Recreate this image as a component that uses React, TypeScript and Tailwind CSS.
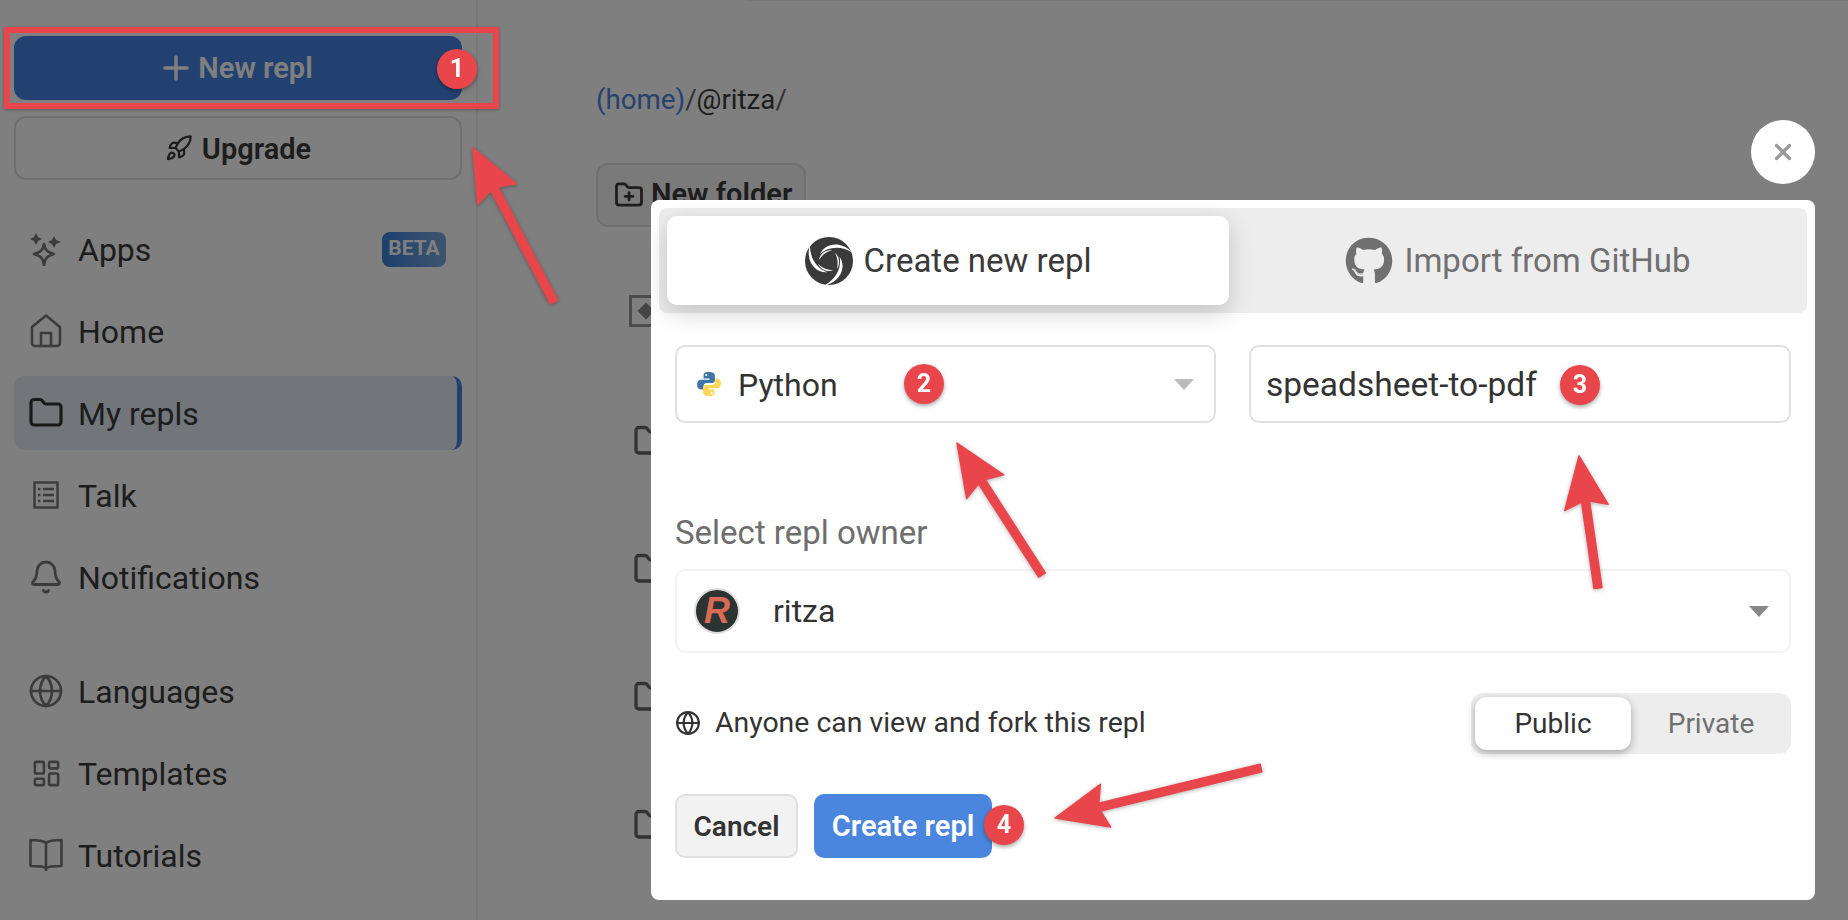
import React from 'react';
import { Bell, Folder, FolderPlus, Globe, LayoutDashboard, Plus, Rocket, X } from 'lucide-react';
import { FaGithub } from 'react-icons/fa';

const font = { fontFamily: 'Roboto, "Noto Sans", sans-serif' };

const AppsIcon = () => (
  <svg width="32" height="34" viewBox="0 0 32 34" fill="none" stroke="currentColor" strokeWidth="2.6" strokeLinejoin="round">
    <path d="M14 12 C15 18 17 20 24 22 C17 24 15 26 14 33 C13 26 11 24 4 22 C11 20 13 18 14 12 Z" />
    <path d="M6 1 L8 5 L12 7 L8 9 L6 13 L4 9 L0 7 L4 5 Z" fill="currentColor" stroke="none" />
    <path d="M24 4 L26 8 L31 10 L26 12 L24 16 L22 12 L18 10 L22 8 Z" fill="currentColor" stroke="none" />
  </svg>
);

const HomeIcon = () => (
  <svg width="32" height="34" viewBox="0 0 32 34" fill="none" stroke="currentColor" strokeWidth="2.6" strokeLinejoin="round">
    <path d="M2 13 L16 1.5 L30 13 V29 a3 3 0 0 1 -3 3 H5 a3 3 0 0 1 -3 -3 Z" />
    <path d="M11 32 V19 H21 V32" />
  </svg>
);

const TalkIcon = () => (
  <svg width="26" height="28" viewBox="0 0 26 28" fill="none" stroke="currentColor" strokeWidth="2.4">
    <rect x="1.5" y="1.5" width="23" height="25" />
    <path d="M10 8 H21 M10 14 H21 M10 20 H21 M5 8 H7.5 M5 14 H7.5 M5 20 H7.5" />
  </svg>
);

const BookIcon = () => (
  <svg width="34" height="34" viewBox="0 0 34 34" fill="none" stroke="currentColor" strokeWidth="2.6" strokeLinejoin="round">
    <path d="M17 5 C14 2.5 7 2 1.5 2 V28 C7 28 14 28 17 30 C20 28 27 28 32.5 28 V2 C27 2 20 2.5 17 5 Z" />
    <path d="M17 5 V33" />
  </svg>
);

// three white blades curling round a dot, like the reference's swirl
const SwirlLogo = () => (
  <svg width="48" height="48" viewBox="-24 -24 48 48">
    <circle r="24" fill="#3a3a3a" />
    {[0, 120, 240].map(a => (
      <g key={a} transform={`rotate(${a})`}>
        <path d="M-9 -7 C-4 -18 12 -21 24 -8 C13 -15 0 -15 -9 -7 Z" fill="#fff" />
        <path d="M-10 -1 C-9 -7 -4 -11 3 -11 C-3 -9 -7 -6 -10 -1 Z" fill="#fff" />
      </g>
    ))}
    <circle r="6.5" fill="#3a3a3a" />
  </svg>
);

const PythonLogo = () => (
  <svg width="26" height="26" viewBox="0 0 24 24">
    <path d="M12 1 C7 1 7 3 7 4.5 V7 H12.5 V8 H4.5 C2.5 8 1 9.5 1 12.5 C1 15.5 2.5 17 4.5 17 H7 V14 C7 12 8.5 11 10 11 H15 C16.5 11 17.5 10 17.5 8.5 V4.5 C17.5 2.5 16 1 12 1 Z" fill="#3f75a8" />
    <path d="M12 23 C17 23 17 21 17 19.5 V17 H11.5 V16 H19.5 C21.5 16 23 14.5 23 11.5 C23 8.5 21.5 7 19.5 7 H17.9 V10 C17.9 12 16 13 14 13 H9 C7.5 13 6.5 14 6.5 15.5 V19.5 C6.5 21.5 8 23 12 23 Z" fill="#fcd757" />
    <circle cx="9.5" cy="3.8" r="1" fill="#fff" />
    <circle cx="14.5" cy="20.2" r="1" fill="#fff" />
  </svg>
);

const Caret = ({ className }: { className: string }) => (
  <div className={`h-0 w-0 border-x-[10px] border-t-[11px] border-x-transparent ${className}`} />
);

const Arrow = ({ tip, tail }: { tip: [number, number]; tail: [number, number] }) => {
  const dx = tail[0] - tip[0];
  const dy = tail[1] - tip[1];
  const len = Math.hypot(dx, dy);
  const ux = dx / len;
  const uy = dy / len;
  const px = -uy;
  const py = ux;
  const at = (along: number, side: number) =>
    `${tip[0] + ux * along + px * side},${tip[1] + uy * along + py * side}`;
  const points = [
    at(0, 0), at(52, 22), at(46, 4), at(len, 4), at(len, -4), at(46, -4), at(52, -22),
  ].join(' ');
  return <polygon points={points} fill="#e9464b" stroke="#e9464b" strokeWidth="1.5" strokeLinejoin="round" />;
};

const Badge = ({ n, className }: { n: number; className: string }) => (
  <div className={`absolute flex h-10 w-10 items-center justify-center rounded-full bg-[#e9464b] text-[25px] font-bold text-white shadow-[0_2px_4px_rgba(0,0,0,0.35)] ${className}`}>
    {n}
  </div>
);

const navTop = [
  { label: 'Apps', icon: <AppsIcon /> },
  { label: 'Home', icon: <HomeIcon /> },
  { label: 'My repls', icon: <Folder size={38} strokeWidth={2.1} className="text-[#333]" />, active: true },
  { label: 'Talk', icon: <TalkIcon /> },
  { label: 'Notifications', icon: <Bell size={36} strokeWidth={1.9} /> },
];

const navBottom = [
  { label: 'Languages', icon: <Globe size={40} strokeWidth={1.8} /> },
  { label: 'Templates', icon: <LayoutDashboard size={31} strokeWidth={2} /> },
  { label: 'Tutorials', icon: <BookIcon /> },
];

const NavRow = ({ label, icon, active }: { label: string; icon: React.ReactNode; active?: boolean }) => (
  <div className={`flex h-[74px] items-center rounded-[10px] pl-[14px] text-[32px] text-[#3a3a3a] ${active ? 'border-r-[5px] border-[#4682e0] bg-[#e4ecf4]' : ''}`}>
    <div className="flex w-[36px] items-center justify-center text-[#777]">{icon}</div>
    <span className="ml-[14px] pt-px">{label}</span>
    {label === 'Apps' && (
      <span className="ml-auto mr-[16px] flex h-[35px] w-[64px] items-center justify-center rounded-lg bg-gradient-to-r from-[#3a7fd8] to-[#7aa9dd] text-[21px] font-bold text-white">
        BETA
      </span>
    )}
  </div>
);

export default function App() {
  return (
    <div className="relative flex h-[920px] w-[1848px] overflow-hidden bg-white" style={font}>
      {/* Sidebar */}
      <aside className="flex h-full w-[478px] flex-col border-r-2 border-[#eee] pl-[14px] pr-[14px] pt-[36px]">
        <button className="flex h-16 items-center justify-center gap-[3px] rounded-[12px] bg-[#4682e0] pr-[6px] text-[29px] font-semibold text-white">
          <Plus size={38} strokeWidth={2.2} />
          <span className="pt-[2px]">New repl</span>
        </button>
        <button className="mt-4 flex h-16 items-center justify-center gap-[9px] rounded-[12px] border-2 border-[#dedede] text-[29px] font-semibold text-[#3a3a3a]">
          <Rocket size={28} strokeWidth={1.9} />
          <span className="pt-[3px]">Upgrade</span>
        </button>
        <nav className="mt-[32px] flex flex-col gap-2">
          {navTop.map(item => <NavRow key={item.label} {...item} />)}
        </nav>
        <nav className="mt-[40px] flex flex-col gap-2">
          {navBottom.map(item => <NavRow key={item.label} {...item} />)}
        </nav>
      </aside>

      {/* Main */}
      <main className="flex-1 pl-[118px]">
        <div className="ml-[150px] h-px bg-[#f0f0f0]" />
        <p className="mt-[81px] text-[27.7px] leading-9 text-[#666]">
          <span className="text-[#4a86dd]">(home)</span>/<span className="text-[#3a3a3a]">@ritza</span>/
        </p>
        <button className="mt-[45px] flex h-16 w-[210px] items-center gap-[7px] rounded-[12px] border-2 border-[#e0e0e0] bg-[#f4f4f4] pl-4 text-[29px] font-semibold text-[#3a3a3a]">
          <FolderPlus size={30} strokeWidth={2.2} />
          New folder
        </button>
        <div className="ml-[33px] mt-[68px] flex h-8 w-10 items-center border-[3px] border-[#999] pl-2">
          <div className="h-3 w-3 rotate-45 bg-[#888]" />
        </div>
        <div className="ml-[37px] mt-[96px] flex flex-col gap-[92px] text-[#666]">
          <Folder size={36} strokeWidth={2.2} />
          <Folder size={36} strokeWidth={2.2} />
          <Folder size={36} strokeWidth={2.2} />
          <Folder size={36} strokeWidth={2.2} />
        </div>
      </main>

      {/* Dimmed backdrop and modal */}
      <div className="fixed inset-0 bg-black/50">
        <button className="absolute left-[1751px] top-[120px] flex h-16 w-16 items-center justify-center rounded-full bg-white text-[#999]">
          <X size={26} strokeWidth={3} />
        </button>
        <div className="absolute left-[651px] top-[200px] h-[700px] w-[1164px] rounded-lg bg-white p-2 text-[#333]">
          <div className="flex h-[105px] gap-2 rounded-lg bg-[#ededed] p-2 text-[33px]">
            <div className="flex flex-1 items-center justify-center gap-[11px] rounded-[10px] bg-white text-[#3a3a3a] shadow-[0_8px_24px_rgba(0,0,0,0.18)]">
              <SwirlLogo />
              Create new repl
            </div>
            <div className="flex flex-1 items-center justify-center gap-[11px] rounded-[10px] text-[#707070]">
              <FaGithub size={48} />
              Import from GitHub
            </div>
          </div>

          <div className="px-4">
            <div className="mt-8 flex gap-[33px]">
              <div className="flex h-[78px] w-[541px] items-center rounded-[10px] border-2 border-[#e0e0e0] pl-[19px] pr-[20px] text-[32px]">
                <PythonLogo />
                <span className="ml-[16px] pt-[2px]">Python</span>
                <Caret className="ml-auto border-t-[#bbb]" />
              </div>
              <div className="flex h-[78px] flex-1 items-center rounded-[10px] border-2 border-[#e0e0e0] pl-[15px] pt-[2px] text-[33.5px]">
                speadsheet-to-pdf
              </div>
            </div>

            <p className="mt-[92px] h-9 text-[33px] leading-9 text-[#6e6e6e]">Select repl owner</p>
            <div className="mt-[18px] flex h-[84px] items-center rounded-[10px] border-2 border-[#f2f2f2] pl-[17px] pr-[20px] text-[32px]">
              <div className="flex h-[46px] w-[46px] items-center justify-center rounded-full border-2 border-[#ddd] bg-[#2b3333] text-[36px] font-black italic text-[#d96b55]" style={{ fontFamily: '"Liberation Sans", sans-serif' }}>
                R
              </div>
              <span className="ml-[33px]">ritza</span>
              <Caret className="ml-auto border-t-[#888]" />
            </div>

            <div className="mt-10 flex h-[61px] items-center justify-between">
              <div className="flex items-center gap-[14px] text-[28.4px]">
                <Globe size={26} strokeWidth={2} />
                Anyone can view and fork this repl
              </div>
              <div className="flex h-[61px] w-[320px] items-center rounded-xl bg-[#ededed] pl-1 text-[28px]">
                <div className="flex h-[53px] w-[156px] items-center justify-center rounded-xl bg-white shadow-[0_3px_8px_rgba(0,0,0,0.3)]">Public</div>
                <div className="flex-1 text-center text-[#707070]">Private</div>
              </div>
            </div>

            <div className="mt-10 flex gap-4">
              <button className="h-16 w-[123px] rounded-[10px] border-2 border-[#e0e0e0] bg-[#f2f2f2] pt-px text-[28px] font-semibold">Cancel</button>
              <button className="h-16 w-[178px] rounded-[10px] bg-[#4a86dd] pt-px text-[29px] font-semibold text-white">Create repl</button>
            </div>
          </div>
        </div>
      </div>

      {/* Annotations drawn on top of the screenshot */}
      <div className="absolute left-[4px] top-[27px] h-[82px] w-[495px] border-[6px] border-[#e9464b] shadow-[0_1px_3px_rgba(0,0,0,0.3)]" />
      <svg className="absolute inset-0 drop-shadow-[0_1px_2px_rgba(0,0,0,0.3)]" width="1848" height="920">
        <Arrow tip={[473, 148]} tail={[554, 302]} />
        <Arrow tip={[957, 443]} tail={[1042, 575]} />
        <Arrow tip={[1579, 456]} tail={[1598, 588]} />
        <Arrow tip={[1055, 818]} tail={[1261, 768]} />
      </svg>
      <Badge n={1} className="left-[437px] top-[49px]" />
      <Badge n={2} className="left-[904px] top-[364px]" />
      <Badge n={3} className="left-[1560px] top-[365px]" />
      <Badge n={4} className="left-[984px] top-[805px]" />
    </div>
  );
}
